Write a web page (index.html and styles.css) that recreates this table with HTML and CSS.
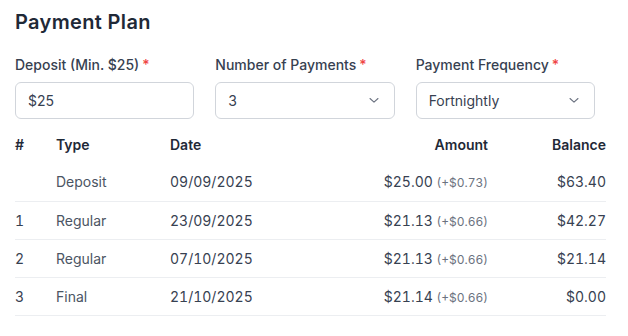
FILE: index.html
```html
<!DOCTYPE html>
<html>
<head>
<meta charset="utf-8">
<link rel="stylesheet" href="styles.css">
</head>
<body>
<div class="plan">
  <h2 class="title">Payment Plan</h2>
  <div class="fields">
    <div class="field">
      <label class="label">Deposit (Min. $25)<span class="req">*</span></label>
      <div class="input">$25</div>
    </div>
    <div class="field">
      <label class="label">Number of Payments<span class="req">*</span></label>
      <div class="input select"><span>3</span>
        <svg class="chev" width="12" height="12" viewBox="0 0 12 12"><path d="M2 4.5 6 8.2l4-3.7" fill="none" stroke="#6b7280" stroke-width="1.1" stroke-linecap="round" stroke-linejoin="round"/></svg>
      </div>
    </div>
    <div class="field">
      <label class="label">Payment Frequency<span class="req">*</span></label>
      <div class="input select"><span>Fortnightly</span>
        <svg class="chev" width="12" height="12" viewBox="0 0 12 12"><path d="M2 4.5 6 8.2l4-3.7" fill="none" stroke="#6b7280" stroke-width="1.1" stroke-linecap="round" stroke-linejoin="round"/></svg>
      </div>
    </div>
  </div>
  <table class="schedule">
    <colgroup>
      <col class="c-num"><col class="c-type"><col class="c-date"><col class="c-amt"><col class="c-bal">
    </colgroup>
    <thead>
      <tr><th>#</th><th>Type</th><th>Date</th><th class="r">Amount</th><th class="r">Balance</th></tr>
    </thead>
    <tbody>
      <tr><td></td><td class="type">Deposit</td><td>09/09/2025</td><td class="r">$25.00 <span class="fee">(+$0.73)</span></td><td class="r">$63.40</td></tr>
      <tr><td>1</td><td class="type">Regular</td><td>23/09/2025</td><td class="r">$21.13 <span class="fee">(+$0.66)</span></td><td class="r">$42.27</td></tr>
      <tr><td>2</td><td class="type">Regular</td><td>07/10/2025</td><td class="r">$21.13 <span class="fee">(+$0.66)</span></td><td class="r">$21.14</td></tr>
      <tr><td>3</td><td class="type">Final</td><td>21/10/2025</td><td class="r">$21.14 <span class="fee">(+$0.66)</span></td><td class="r">$0.00</td></tr>
    </tbody>
  </table>
</div>
</body>
</html>
```

FILE: styles.css
```css
* { box-sizing: border-box; }
body {
  margin: 0;
  background: #fff;
  font-family: Inter, "Noto Sans", sans-serif;
  color: #374151;
}
.plan {
  width: 606px;
  padding: 8px 0 0 15px;
}
.title {
  margin: 0;
  font-size: 20px;
  line-height: 28px;
  font-weight: 600;
  letter-spacing: 0.35px;
  color: #1f2937;
}
.fields {
  display: grid;
  grid-template-columns: repeat(3, 1fr);
  column-gap: 21px;
  width: 580px;
  margin-top: 19px;
}
.field {
  display: flex;
  flex-direction: column;
}
.label {
  font-size: 14px;
  line-height: 20px;
  font-weight: 500;
  color: #374151;
}
.req {
  color: #ef4444;
  margin-left: 3px;
}
.input {
  margin-top: 7px;
  height: 37px;
  border: 1px solid #d1d5db;
  border-radius: 6px;
  padding: 0 12px;
  display: flex;
  align-items: center;
  justify-content: space-between;
  font-size: 14px;
  color: #374151;
}
.chev { margin-right: 2px; margin-top: -2px; }
.schedule {
  width: 591px;
  border-collapse: collapse;
  table-layout: fixed;
  margin-top: 6px;
  font-size: 14px;
  font-variant-numeric: tabular-nums;
}
.c-num { width: 41px; }
.c-type { width: 114px; }
.c-date { width: 140px; }
.c-amt { width: 178px; }
.c-bal { width: 118px; }
th {
  text-align: left;
  font-weight: 600;
  color: #1f2937;
  height: 38px;
  padding: 0;
}
td {
  height: 38px;
  padding: 0;
  border-bottom: 1px solid #eceef1;
  color: #374151;
}
.type { color: #4b5563; }
.r { text-align: right; }
.fee {
  font-size: 12px;
  color: #6b7280;
}
```
